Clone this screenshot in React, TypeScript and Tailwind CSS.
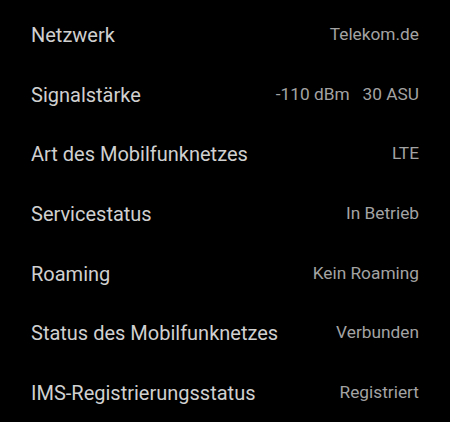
const ROWS: [string, string][] = [
  ["Netzwerk", "Telekom.de"],
  ["Signalstärke", "-110 dBm   30 ASU"],
  ["Art des Mobilfunknetzes", "LTE"],
  ["Servicestatus", "In Betrieb"],
  ["Roaming", "Kein Roaming"],
  ["Status des Mobilfunknetzes", "Verbunden"],
  ["IMS-Registrierungsstatus", "Registriert"],
];

export default function App() {
  return (
    <div
      className="h-[422px] w-[450px] overflow-hidden bg-black pt-[5px] pl-[31px] pr-[31px]"
      style={{ fontFamily: "Roboto, 'Noto Sans', sans-serif" }}
    >
      {ROWS.map(([label, value]) => (
        <div key={label} className="flex h-[59.7px] items-center justify-between">
          <span className="text-[20px] text-[#d0d0d0]">{label}</span>
          <span className="whitespace-pre text-[17.3px] text-[#a3a3a3]">{value}</span>
        </div>
      ))}
    </div>
  );
}
